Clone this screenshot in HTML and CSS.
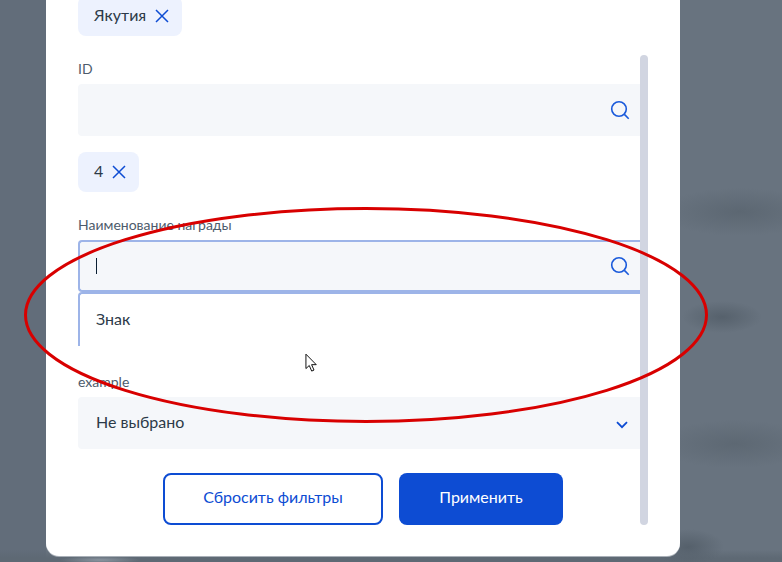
FILE: index.html
```html
<!DOCTYPE html>
<html lang="ru">
<head>
<meta charset="utf-8">
<title>Фильтры</title>
<link rel="stylesheet" href="styles.css">
</head>
<body>
<div class="backdrop">
  <div class="modal">
    <div class="content">
      <div class="fields">
        <span class="chip"><span class="chip-text">Якутия</span>
          <svg class="chip-x" viewBox="0 0 14 14"><path d="M1 1l12 12M13 1L1 13"/></svg>
        </span>

        <div class="label label-first">ID</div>
        <div class="input">
          <svg class="search" viewBox="0 0 20 20"><circle cx="9" cy="9" r="7.3"/><path d="M14.4 14.4l4.3 4.3"/></svg>
        </div>

        <span class="chip chip-second"><span class="chip-text">4</span>
          <svg class="chip-x" viewBox="0 0 14 14"><path d="M1 1l12 12M13 1L1 13"/></svg>
        </span>

        <div class="label label-first">Наименование награды</div>
        <div class="input input-focus">
          <span class="caret"></span>
          <svg class="search" viewBox="0 0 20 20"><circle cx="9" cy="9" r="7.3"/><path d="M14.4 14.4l4.3 4.3"/></svg>
        </div>
        <div class="dropdown">Знак</div>

        <div class="label label-example">example</div>
        <div class="input select">
          <span class="select-text">Не выбрано</span>
          <svg class="chevron" viewBox="0 0 12 8"><path d="M1 1.2l5 5 5-5"/></svg>
        </div>
      </div>
      <div class="scrollbar"></div>
    </div>
    <div class="actions">
      <button class="btn btn-outline">Сбросить фильтры</button>
      <button class="btn btn-primary">Применить</button>
    </div>
  </div>

  <svg class="annotation" viewBox="0 0 782 562">
    <ellipse cx="366" cy="315" rx="340.5" ry="106.5"/>
  </svg>
  <svg class="pointer" viewBox="0 0 14 21">
    <path d="M1 1v15.5l3.6-3.3 2.6 6 2.5-1.1-2.6-5.8h5z"/>
  </svg>
</div>
</body>
</html>
```
FILE: styles.css
```css
* { box-sizing: border-box; }
html, body { margin: 0; height: 100%; }
body { overflow: hidden; font-family: Lato, "Noto Sans", "Liberation Sans", sans-serif; color: #2c3a48; }

.backdrop {
  position: relative;
  width: 782px;
  height: 562px;
  overflow: hidden;
  padding-left: 46px;
  background-color: #68737f;
  background-image:
    radial-gradient(ellipse 80px 24px at 740px 212px, #5c6772 0%, rgba(92,103,114,0) 100%),
    radial-gradient(ellipse 40px 16px at 722px 317px, #56616c 0%, rgba(86,97,108,0) 100%),
    radial-gradient(ellipse 80px 24px at 735px 444px, #5d6873 0%, rgba(93,104,115,0) 100%),
    radial-gradient(ellipse 36px 18px at 688px 547px, #55606b 0%, rgba(85,96,107,0) 100%),
    radial-gradient(ellipse 40px 4px at 100px 560px, #8b95a0 0%, rgba(139,149,160,0) 100%),
    linear-gradient(to bottom, rgba(94,105,116,0) 550px, #5e6974 558px),
    linear-gradient(to right, #626d7a 46px, rgba(98,109,122,0) 46px);
}

.modal {
  width: 634px;
  height: 556px;
  background: #fff;
  border-radius: 0 0 13px 13px;
  padding: 0 32px 31px;
  display: flex;
  flex-direction: column;
  justify-content: flex-end;
  overflow: hidden;
  box-shadow: 0 1px 0 #a9b0b8;
}

.content { display: flex; align-items: flex-start; }
.fields { width: 562px; flex: none; display: flex; flex-direction: column; align-items: stretch; }
.scrollbar {
  width: 8px;
  height: 470px;
  flex: none;
  align-self: flex-end;
  margin-bottom: -76px;
  background: #d1d5e1;
  border-radius: 4px;
}

.chip {
  align-self: flex-start;
  display: inline-flex;
  align-items: center;
  gap: 9px;
  height: 40px;
  padding: 0 13px 0 16px;
  background: #edf2fe;
  border-radius: 8px;
  font-size: 16px;
  line-height: 24px;
}
.chip-text { margin-bottom: 2px; }
.chip-second { margin-top: 16px; }
.chip-x { width: 14px; height: 14px; fill: none; stroke: #0d4cd3; stroke-width: 1.5; }

.label { height: 20px; margin-bottom: 5px; font-size: 14px; line-height: 20px; color: #4d5b6b; }
.label-first { margin-top: 23px; }
.label-example { margin-top: 26px; }

.input {
  height: 52px;
  background: #f5f7fa;
  border-radius: 4px 0 0 4px;
  display: flex;
  align-items: center;
  justify-content: flex-end;
  padding: 0 10px 0 18px;
  font-size: 16px;
}
.search { width: 20px; height: 20px; fill: none; stroke: #1a5adb; stroke-width: 1.6; }

.input-focus {
  border: solid #9db4e8;
  border-width: 2px 0 2px 2px;
  padding-left: 16px;
}
.caret { width: 1px; height: 16px; background: #0b1f33; margin-right: auto; }

.dropdown {
  height: 54px;
  border: solid #9db4e8;
  border-width: 2px 0 0 2px;
  border-radius: 4px 0 0 0;
  padding: 13px 0 0 16px;
  font-size: 16px;
  line-height: 24px;
  color: #2c3a48;
}

.select { justify-content: space-between; padding-right: 12px; }
.select-text { margin-bottom: 4px; }
.chevron { width: 12px; height: 8px; fill: none; stroke: #0d4cd3; stroke-width: 1.8; margin-top: 3px; }

.actions { display: flex; justify-content: center; gap: 16px; width: 570px; margin-top: 24px; }
.btn {
  height: 52px;
  border-radius: 8px;
  font-family: inherit;
  font-size: 16px;
  line-height: 24px;
  padding: 0 0 4px;
}
.btn-outline { width: 220px; background: #fff; border: 2px solid #0d4cd3; color: #0d4cd3; }
.btn-primary { width: 164px; background: #0d4cd3; border: 0; color: #fff; }

.annotation { position: absolute; left: 0; top: 0; width: 782px; height: 562px; fill: none; stroke: #d80000; stroke-width: 3; pointer-events: none; }
.pointer { position: absolute; left: 305px; top: 353px; width: 13px; height: 20px; fill: #fff; stroke: #000; stroke-width: 1; }
```
